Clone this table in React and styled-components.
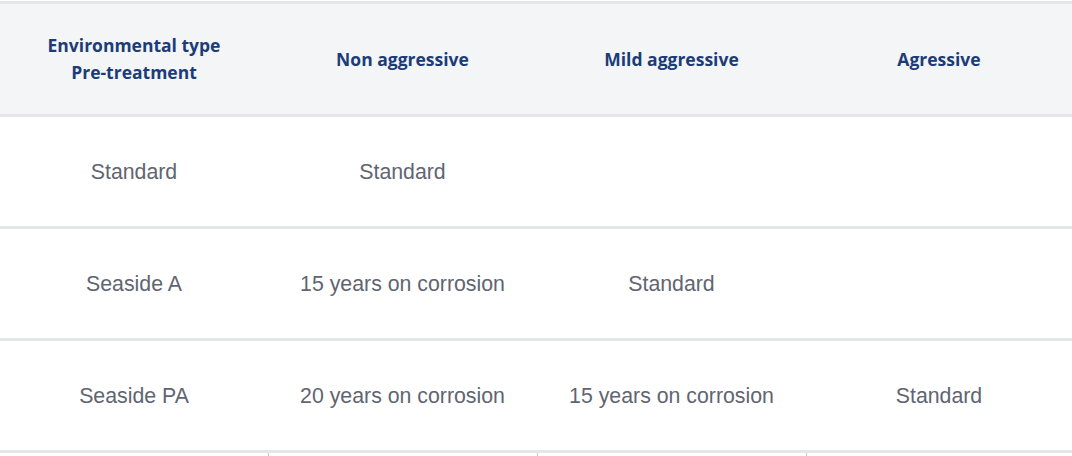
import styled, { createGlobalStyle } from "styled-components"

const GlobalStyle = createGlobalStyle`
  html, body {
    margin: 0;
    padding: 0;
    background: #ffffff;
    overflow: hidden;
  }
`

const Wrapper = styled.div`
  width: 1072px;
  padding-top: 1px;
`

const Table = styled.div`
  display: grid;
  grid-template-columns: 268px 269px 269px 1fr;
  border-top: 3px solid #e5e6e8;
`

const HeadCell = styled.div`
  height: 110px;
  display: flex;
  align-items: center;
  justify-content: center;
  text-align: center;
  background: #f3f5f7;
  border-bottom: 3px solid #e5e6e8;
  color: #1c3c78;
  font-family: "Open Sans", "Noto Sans", sans-serif;
  font-weight: 700;
  font-size: 17.5px;
  line-height: 27px;
`

const Cell = styled.div`
  box-sizing: border-box;
  height: 112px;
  display: flex;
  align-items: center;
  justify-content: center;
  text-align: center;
  padding-top: 2px;
  border-bottom: 3px solid #e5e6e8;
  color: #5f6571;
  font-family: "Liberation Sans", Arial, sans-serif;
  font-size: 21.3px;
`

const FootCell = styled.div`
  height: 3px;
  border-left: ${props => (props.first ? "none" : "1px solid #c9c9c9")};
`

const head = [
  ["Environmental type", "Pre-treatment"],
  ["Non aggressive"],
  ["Mild aggressive"],
  ["Agressive"],
]

const rows = [
  ["Standard", "Standard", "", ""],
  ["Seaside A", "15 years on corrosion", "Standard", ""],
  ["Seaside PA", "20 years on corrosion", "15 years on corrosion", "Standard"],
]

const App = () => (
  <Wrapper>
    <GlobalStyle />
    <Table>
      {head.map((lines, i) => (
        <HeadCell key={"h" + i}>
          <div>
            {lines.map(l => (
              <div key={l}>{l}</div>
            ))}
          </div>
        </HeadCell>
      ))}
      {rows.map((row, r) =>
        row.map((text, c) => <Cell key={r + "-" + c}>{text}</Cell>)
      )}
      {[0, 1, 2, 3].map(i => (
        <FootCell key={"f" + i} first={i === 0} />
      ))}
    </Table>
  </Wrapper>
)

export default App
